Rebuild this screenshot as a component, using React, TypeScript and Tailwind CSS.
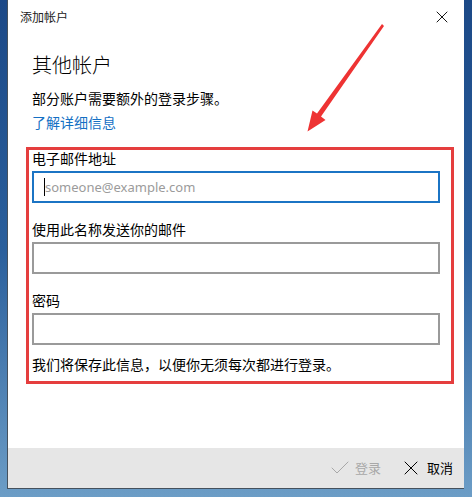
import { Check, X } from 'lucide-react'

const font = { fontFamily: '"Noto Sans CJK SC", "Noto Sans", sans-serif' }

const Field = ({ label, placeholder, active }: { label: string; placeholder?: string; active?: boolean }) => (
  <div className="flex flex-col">
    <div className="h-5 leading-5 text-[14px] text-black">{label}</div>
    <div
      className={`mt-[3px] h-8 w-[408px] flex items-center px-[10px] bg-white border-2 ${
        active ? 'border-[#1b74c4]' : 'border-[#9a9a9a]'
      }`}
    >
      {active && <span className="w-px h-[18px] bg-black" />}
      {placeholder && (
        <span className="text-[13px] text-[#9b9b9b] leading-none" style={{ fontFamily: '"Noto Sans", sans-serif' }}>
          {placeholder}
        </span>
      )}
    </div>
  </div>
)

export default function App() {
  return (
    <div
      className="relative w-[472px] h-[497px] overflow-hidden bg-gradient-to-b from-[#1c4987] via-[#2a5f9c] to-[#6c9dc6] pl-[7px]"
      style={font}
    >
      <div className="relative w-[457px] h-[489px] bg-white flex flex-col border-l border-b border-[#45515d]">
        {/* title bar */}
        <div className="h-[34px] flex items-center justify-between pl-[12px] pr-[12px]">
          <span className="text-[12px] text-[#222]">添加帐户</span>
          <X className="w-5 h-5 text-black" strokeWidth={1.1} />
        </div>

        <div className="flex flex-col pl-[24px]">
          <div className="mt-[18px] h-[26px] leading-[26px] text-[20px] text-black font-light">其他帐户</div>
          <div className="mt-[10px] h-5 leading-5 text-[14px] text-black">部分账户需要额外的登录步骤。</div>
          <div className="mt-[4px] h-5 leading-5 text-[14px] text-[#1470c4]">了解详细信息</div>

          <div className="mt-[16px]">
            <Field label="电子邮件地址" placeholder="someone@example.com" active />
          </div>
          <div className="mt-[16px]">
            <Field label="使用此名称发送你的邮件" />
          </div>
          <div className="mt-[16px]">
            <Field label="密码" />
          </div>
          <div className="mt-[9px] h-5 leading-5 text-[14px] text-black">我们将保存此信息，以便你无须每次都进行登录。</div>
        </div>

        <div className="flex-1" />

        {/* footer */}
        <div className="h-10 bg-[#e6e6e6] flex items-center justify-end pr-[11px] gap-[18px] text-[13px]">
          <div className="flex items-center gap-[3px] text-[#a8a8a8]">
            <Check className="w-6 h-6" strokeWidth={1} />
            <span>登录</span>
          </div>
          <div className="flex items-center gap-[4px] text-black">
            <X className="w-6 h-6" strokeWidth={1} />
            <span>取消</span>
          </div>
        </div>

        {/* red annotation box */}
        <div className="absolute left-[18px] top-[147px] w-[428px] h-[237px] border-[3px] border-[#e53e3e]" />
      </div>

      {/* red annotation arrow */}
      <svg className="absolute left-0 top-0" width="472" height="497" viewBox="0 0 472 497">
        <polygon
          points="382,24 384,26 321,116.5 325.5,120 307.5,131.5 312.5,110.5 317,113.5"
          fill="#ee3333"
        />
      </svg>
    </div>
  )
}
